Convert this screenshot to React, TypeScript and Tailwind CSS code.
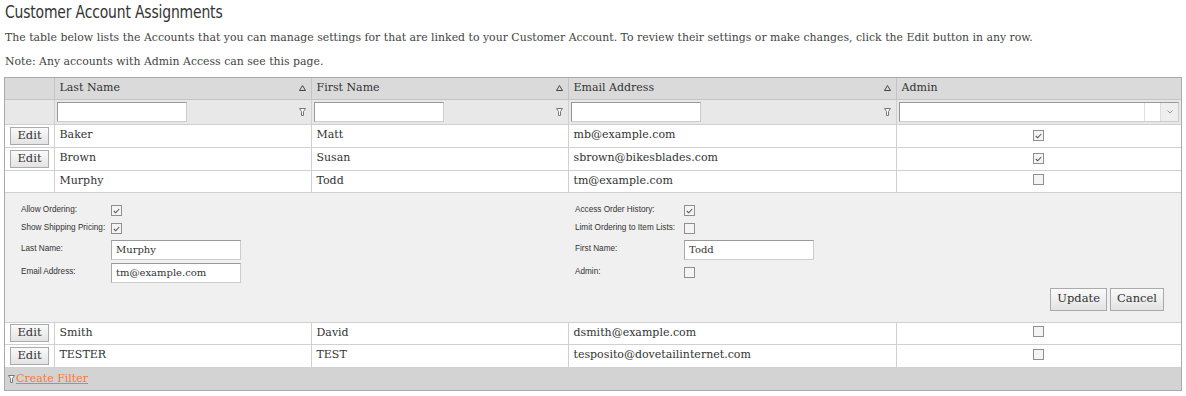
const serif = "font-['DejaVu_Serif','Liberation_Serif',serif]";

function SortIcon() {
  return (
    <svg width="7" height="6" viewBox="0 0 7 6" className="shrink-0">
      <path d="M3.5 0.5 L6.5 5.5 L0.5 5.5 Z" fill="none" stroke="#444" strokeWidth="1" />
    </svg>
  );
}

function FilterIcon() {
  return (
    <svg width="7" height="8" viewBox="0 0 7 8" className="shrink-0">
      <path d="M0.5 0.5 H6.5 L4.5 3.5 V7.5 H2.5 V3.5 Z" fill="#fff" stroke="#777" strokeWidth="1" />
    </svg>
  );
}

function Check({ on }: { on: boolean }) {
  return (
    <span className="inline-flex h-[11px] w-[11px] items-center justify-center border border-[#8f8f8f] bg-[#f4f4f4]">
      {on && (
        <svg width="7" height="6" viewBox="0 0 7 6">
          <path d="M0.8 3 L2.7 4.8 L6.2 1" fill="none" stroke="#555" strokeWidth="1.1" />
        </svg>
      )}
    </span>
  );
}

const btn = `border border-[#aaa] bg-gradient-to-b from-[#fafafa] to-[#e3e3e3] text-[#333] leading-none ${serif}`;

function EditBtn() {
  return <button className={`h-[18px] w-[39px] text-[11.5px] ${btn}`}>Edit</button>;
}

type Row = { last: string; first: string; email: string; admin: boolean; edit: boolean; h: string };

const rows: Row[] = [
  { last: "Baker", first: "Matt", email: "mb@example.com", admin: true, edit: true, h: "h-[23px]" },
  { last: "Brown", first: "Susan", email: "sbrown@bikesblades.com", admin: true, edit: true, h: "h-[23px]" },
  { last: "Murphy", first: "Todd", email: "tm@example.com", admin: false, edit: false, h: "h-[22px]" },
];
const rows2: Row[] = [
  { last: "Smith", first: "David", email: "dsmith@example.com", admin: false, edit: true, h: "h-[22px]" },
  { last: "TESTER", first: "TEST", email: "tesposito@dovetailinternet.com", admin: false, edit: true, h: "h-[23px]" },
];

function DataRow({ r }: { r: Row }) {
  return (
    <tr className={`${r.h} bg-white`}>
      <td className="border border-[#d0d0d0] border-l-0 pl-[5px]">{r.edit && <EditBtn />}</td>
      <td className="border border-[#d0d0d0] px-[5px]">{r.last}</td>
      <td className="border border-[#d0d0d0] px-[5px]">{r.first}</td>
      <td className="border border-[#d0d0d0] px-[5px]">{r.email}</td>
      <td className="border border-[#d0d0d0] border-r-0 text-center">
        <span className="inline-flex pt-[3px]"><Check on={r.admin} /></span>
      </td>
    </tr>
  );
}

const label = "whitespace-nowrap font-['Liberation_Sans','DejaVu_Sans',sans-serif] text-[8.2px] text-[#333]";

function DetailInput({ value }: { value: string }) {
  return (
    <div className={`flex h-[20px] w-[130px] items-center border border-[#ccc] border-t-[#999] border-l-[#aaa] bg-white px-[4px] text-[10px] text-[#333] ${serif}`}>
      {value}
    </div>
  );
}

export default function App() {
  return (
    <div className={`w-[1186px] h-[396px] bg-white text-[#333] ${serif}`}>
      <h1 className="origin-left scale-x-[0.82] px-[6px] pt-[2px] text-[17px] leading-[20px] font-['DejaVu_Sans',sans-serif] tracking-[-0.2px] text-[#333]">
        Customer Account Assignments
      </h1>
      <p className="mt-[9px] px-[5px] text-[10.9px] leading-[14px] text-[#444]">
        The table below lists the Accounts that you can manage settings for that are linked to your Customer Account. To review their settings or make changes, click the Edit button in any row.
      </p>
      <p className="mt-[10px] px-[5px] text-[10.9px] leading-[14px] text-[#444]">
        Note: Any accounts with Admin Access can see this page.
      </p>

      <div className="mt-[8px] ml-[4px] w-[1178px] border border-[#aaa]">
        <table className="w-full table-fixed border-collapse text-[11px] text-[#333]">
          <colgroup>
            <col className="w-[49px]" />
            <col className="w-[257px]" />
            <col className="w-[257px]" />
            <col className="w-[328px]" />
            <col className="w-[285px]" />
          </colgroup>
          <thead>
            <tr className="h-[21px] bg-[#dadada]">
              <th className="border border-[#c4c4c4] border-t-0 border-l-0" />
              {["Last Name", "First Name", "Email Address"].map((h) => (
                <th key={h} className="border border-[#c4c4c4] border-t-0 px-[5px] text-left font-normal">
                  <div className="flex items-center justify-between">
                    <span>{h}</span>
                    <SortIcon />
                  </div>
                </th>
              ))}
              <th className="border border-[#c4c4c4] border-t-0 border-r-0 px-[5px] text-left font-normal">Admin</th>
            </tr>
            <tr className="h-[25px] bg-[#e8e8e8]">
              <td className="border border-[#d0d0d0] border-l-0" />
              {[0, 1, 2].map((i) => (
                <td key={i} className="border border-[#d0d0d0] px-[2px]">
                  <div className="flex items-center justify-between pr-[3px]">
                    <div className="h-[20px] w-[130px] border border-[#ccc] border-t-[#999] border-l-[#999] bg-white" />
                    <FilterIcon />
                  </div>
                </td>
              ))}
              <td className="border border-[#d0d0d0] border-r-0 px-[2px]">
                <div className="flex h-[20px] border border-[#ccc] border-t-[#999] border-l-[#999] bg-white">
                  <div className="flex-1" />
                  <div className="w-[16px] border-l border-[#e0e0e0]" />
                  <div className="flex w-[18px] items-center justify-center border-l border-[#ddd] bg-[#eee]">
                    <svg width="6" height="4" viewBox="0 0 6 4">
                      <path d="M0.5 0.5 L3 3 L5.5 0.5" fill="none" stroke="#999" strokeWidth="1" />
                    </svg>
                  </div>
                </div>
              </td>
            </tr>
          </thead>
          <tbody>
            {rows.map((r) => (
              <DataRow key={r.last} r={r} />
            ))}
            <tr className="h-[130px] bg-[#f0f0f0]">
              <td colSpan={5} className="h-[130px] border border-[#d0d0d0] border-x-0 p-0 align-top">
                <div className="flex h-[129px] pt-[10px] pl-[16px]">
                  <div className="grid w-[554px] grid-cols-[90px_1fr] grid-rows-[16px_20px_22px_24px] items-center content-start">
                    <span className={label}>Allow Ordering:</span>
                    <Check on />
                    <span className={label}>Show Shipping Pricing:</span>
                    <Check on />
                    <span className={label}>Last Name:</span>
                    <DetailInput value="Murphy" />
                    <span className={label}>Email Address:</span>
                    <DetailInput value="tm@example.com" />
                  </div>
                  <div className="flex-1 pr-[17px]">
                    <div className="grid grid-cols-[109px_1fr] grid-rows-[16px_20px_22px_24px] items-center">
                      <span className={label}>Access Order History:</span>
                      <Check on />
                      <span className={label}>Limit Ordering to Item Lists:</span>
                      <Check on={false} />
                      <span className={label}>First Name:</span>
                      <DetailInput value="Todd" />
                      <span className={label}>Admin:</span>
                      <Check on={false} />
                    </div>
                    <div className="mt-[3px] flex justify-end gap-[3px]">
                      <button className={`h-[23px] px-[6px] text-[11.5px] ${btn}`}>Update</button>
                      <button className={`h-[23px] px-[6px] text-[11.5px] ${btn}`}>Cancel</button>
                    </div>
                  </div>
                </div>
              </td>
            </tr>
            {rows2.map((r) => (
              <DataRow key={r.last} r={r} />
            ))}
            <tr className="h-[23px] bg-[#d3d3d3]">
              <td colSpan={5} className="border-t border-[#aaa] pl-[3px]">
                <div className="flex items-center gap-[1px]">
                  <FilterIcon />
                  <a href="#" className="text-[11px] text-[#f47b35] underline">Create Filter</a>
                </div>
              </td>
            </tr>
          </tbody>
        </table>
      </div>
    </div>
  );
}
